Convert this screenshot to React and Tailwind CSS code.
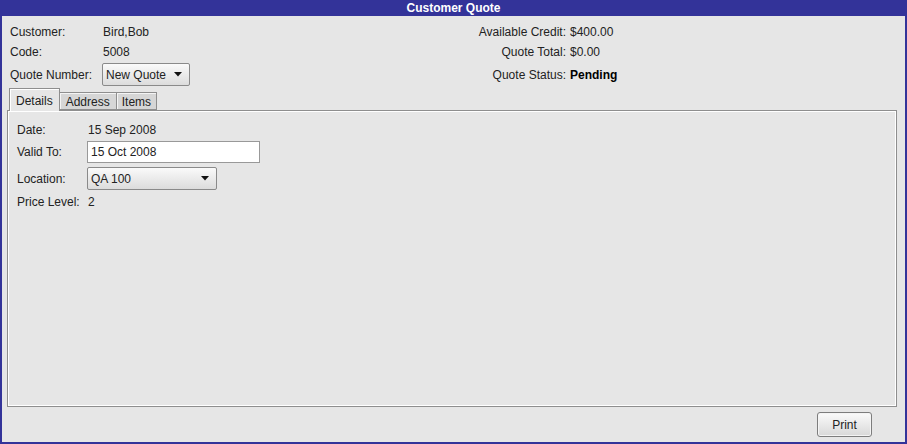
export default function App() {
  const font = { fontFamily: '"Liberation Sans", Arial, sans-serif' };
  return (
    <div style={font} className="w-[907px] h-[444px] flex flex-col bg-[#e6e6e6] border-x-2 border-b-2 border-[#333399] text-[12px] text-[#222] overflow-hidden">
      <div className="h-[16px] -mx-[2px] bg-[#333399] text-white font-bold flex items-center justify-center leading-none shrink-0">
        Customer Quote
      </div>
      <div className="grid grid-cols-[93px_1fr_auto_335px] pl-2 pt-[5px]">
        <div className="h-[20px] pt-[2px] flex items-center">Customer:</div>
        <div className="h-[20px] pt-[2px] flex items-center">Bird,Bob</div>
        <div className="h-[20px] pt-[2px] flex items-center justify-end pr-1">Available Credit:</div>
        <div className="h-[20px] pt-[2px] flex items-center">$400.00</div>
        <div className="h-[20px] pt-[2px] flex items-center">Code:</div>
        <div className="h-[20px] pt-[2px] flex items-center">5008</div>
        <div className="h-[20px] pt-[2px] flex items-center justify-end pr-1">Quote Total:</div>
        <div className="h-[20px] pt-[2px] flex items-center">$0.00</div>
        <div className="h-[25px] pt-[2px] flex items-center">Quote Number:</div>
        <div className="h-[25px] pt-[2px] flex items-center">
          <div className="-ml-[1px] w-[88px] h-[23px] border border-[#8a8a8a] rounded-[2px] bg-gradient-to-b from-[#fafafa] to-[#dcdcdc] flex items-center justify-between pl-[3px] pr-[7px]">
            <span>New Quote</span>
            <svg width="8" height="5" viewBox="0 0 8 5"><path d="M0 0H8L4 4.5Z" fill="#111" /></svg>
          </div>
        </div>
        <div className="h-[25px] pt-[2px] flex items-center justify-end pr-1">Quote Status:</div>
        <div className="h-[25px] pt-[2px] flex items-center font-bold text-black">Pending</div>
      </div>
      <div className="flex items-end h-[22px] mt-[2px] pl-[7px] relative z-10 shrink-0">
        <div className="h-[23px] -mb-[1px] px-[6px] pt-[1px] border border-b-0 border-[#8e8e8e] bg-[#e6e6e6] flex items-center shadow-[inset_1px_1px_0_#ffffff]">Details</div>
        <div className="h-[18px] px-[6px] pt-[1px] border border-l-0 border-[#8e8e8e] bg-[#d6d6d6] flex items-center shadow-[inset_1px_1px_0_#f4f4f4]">Address</div>
        <div className="h-[18px] px-[5px] pt-[1px] border border-l-0 border-[#8e8e8e] bg-[#d6d6d6] flex items-center shadow-[inset_1px_1px_0_#f4f4f4]">Items</div>
      </div>
      <div className="mx-[5px] mr-[8px] h-[297px] border border-[#8e8e8e] shrink-0">
        <div className="h-full border border-white pl-[8px] pt-[8px]">
          <div className="grid grid-cols-[71px_auto] items-center">
            <div className="h-[18px] pt-[1px] flex items-center">Date:</div>
            <div className="h-[18px] pt-[1px] flex items-center">15 Sep 2008</div>
            <div className="h-[28px] flex items-center">Valid To:</div>
            <div className="h-[28px] flex items-center">
              <div className="-ml-[1px] w-[173px] h-[22px] border border-[#999] bg-white flex items-center pl-[3px]">15 Oct 2008</div>
            </div>
            <div className="h-[25px] flex items-center">Location:</div>
            <div className="h-[25px] flex items-center">
              <div className="-ml-[1px] w-[130px] h-[23px] border border-[#8a8a8a] rounded-[2px] bg-gradient-to-b from-[#fafafa] to-[#dcdcdc] flex items-center justify-between pl-[3px] pr-[7px]">
                <span>QA 100</span>
                <svg width="8" height="5" viewBox="0 0 8 5"><path d="M0 0H8L4 4.5Z" fill="#111" /></svg>
              </div>
            </div>
            <div className="h-[20px] pt-[1px] flex items-center">Price Level:</div>
            <div className="h-[20px] pt-[1px] flex items-center">2</div>
          </div>
        </div>
      </div>
      <div className="flex justify-end pr-[33px] pt-[5px]">
        <div className="w-[55px] h-[25px] border border-[#7d7d7d] rounded-[3px] bg-gradient-to-b from-[#fbfbfb] to-[#d8d8d8] flex items-center justify-center shadow-[inset_0_0_0_1px_#f4f4f4]">Print</div>
      </div>
    </div>
  );
}
